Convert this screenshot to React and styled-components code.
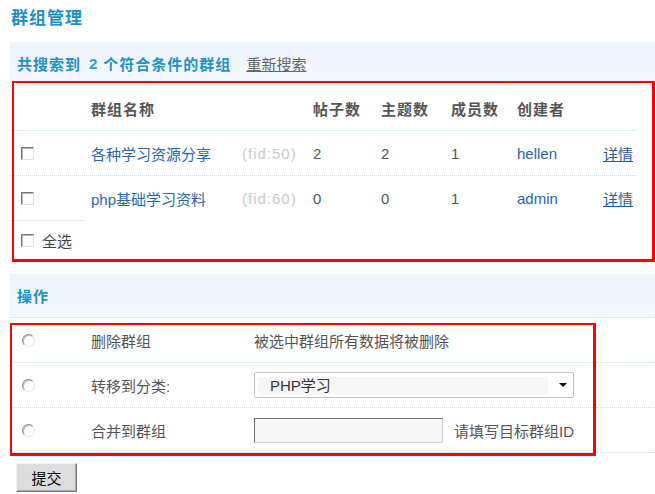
import React from "react";
import styled, { createGlobalStyle } from "styled-components";

const GlobalStyle = createGlobalStyle`
  html, body {
    margin: 0;
    padding: 0;
    background: #fff;
  }
  body {
    font-family: "Liberation Sans", "Noto Sans CJK SC", sans-serif;
    font-size: 15px;
    color: #555;
  }
`;

const groups = [
  { name: "各种学习资源分享", fid: 50, posts: 2, threads: 2, members: 1, founder: "hellen" },
  { name: "php基础学习资料", fid: 60, posts: 0, threads: 0, members: 1, founder: "admin" },
];

const Page = styled.div`
  padding-left: 10px;
  overflow: hidden;
`;

const Title = styled.h2`
  margin: 0;
  height: 42px;
  line-height: 37px;
  padding-left: 1px;
  font-size: 17px;
  font-weight: bold;
  letter-spacing: 1px;
  color: #1b8fcc;
`;

const Strip = styled.div`
  display: flex;
  align-items: center;
  box-sizing: border-box;
  height: ${(p) => p.$h}px;
  margin-top: ${(p) => p.$mt || 0}px;
  padding: ${(p) => p.$pt || 0}px 0 0 7px;
  background: linear-gradient(#edf4fc, #f4f8fd);
  border-bottom: ${(p) => (p.$rule ? "1px dotted #c6dcee" : "none")};
  font-weight: bold;
  letter-spacing: 1px;
  color: #1d93c8;
`;

const Count = styled.span`
  margin: 0 5px 0 8px;
  color: #2aa0d6;
`;

const ResetLink = styled.a`
  margin-left: 15px;
  font-weight: normal;
  letter-spacing: 0;
  color: #666;
  text-decoration: underline;
  cursor: pointer;
`;

/* red marking frame drawn over the block */
const Framed = styled.div`
  position: relative;
  padding-top: ${(p) => p.$pt || 0}px;

  &::after {
    content: "";
    position: absolute;
    pointer-events: none;
    top: ${(p) => p.$ft}px;
    left: ${(p) => p.$fl}px;
    ${(p) => (p.$fw ? `width: ${p.$fw}px;` : "right: 0;")}
    bottom: ${(p) => p.$fb}px;
    box-sizing: border-box;
    border: solid #f00;
    border-width: 2px 3px 3px 2px;
  }
`;

const Results = styled.div`
  border-top: 1px dotted #c6dcee;
`;

const Row = styled.div`
  display: grid;
  grid-template-columns: 75px 157px 71px 68px 70px 66px 86px 34px;
  width: 627px;
  height: 44px;
  align-items: center;
  border-top: ${(p) => (p.$head ? "none" : "1px dotted #c6dcee")};
  font-weight: ${(p) => (p.$head ? "bold" : "normal")};
  letter-spacing: ${(p) => (p.$head ? 1 : 0)}px;
  color: #555;
`;

const Cell = styled.div`
  display: flex;
  align-items: center;
  gap: 8px;
  padding-left: ${(p) => p.$pl || 0}px;
  white-space: nowrap;
  color: ${(p) => p.$color || "inherit"};
  letter-spacing: ${(p) => (p.$ls != null ? `${p.$ls}px` : "inherit")};
`;

const Link = styled.a`
  color: ${(p) => (p.$under ? "#1c5ea6" : "#2766ad")};
  text-decoration: ${(p) => (p.$under ? "underline" : "none")};
  cursor: pointer;
`;

const SelectAllRow = styled.div`
  display: flex;
  height: 40px;
`;

const SelectAllCell = styled.label`
  display: flex;
  align-items: center;
  gap: 8px;
  width: 75px;
  box-sizing: border-box;
  padding-left: 11px;
  border-top: 1px dotted #c6dcee;
  color: #444;
`;

const Check = styled.span`
  display: inline-block;
  box-sizing: border-box;
  width: 13px;
  height: 13px;
  border: 1px solid;
  border-color: #767676 #e0e0e0 #e0e0e0 #767676;
  box-shadow: inset 1px 1px 0 #b8b8b8;
  background: #fff;
`;

const Radio = styled(Check)`
  border-radius: 50%;
  border-color: #8a8a8a #e4e4e4 #e4e4e4 #8a8a8a;
  box-shadow: inset 1px 1px 0 #c4c4c4;
`;

const OpRow = styled.div`
  display: grid;
  grid-template-columns: 81px 163px 1fr;
  height: 44px;
  align-items: center;
  border-bottom: 1px dotted #c6dcee;
  color: #555;
`;

const Select = styled.div`
  display: flex;
  align-items: center;
  box-sizing: border-box;
  width: 320px;
  height: 26px;
  padding: 0 6px 0 3px;
  border: 1px solid #c6c6c6;
  border-radius: 2px;
  background: #fff;
`;

const SelectValue = styled.div`
  flex: 1;
  height: 17px;
  line-height: 17px;
  padding-left: 12px;
  background: #f7f7f7;
  color: #333;
`;

const Caret = styled.span`
  margin-left: 11px;
  border-left: 4px solid transparent;
  border-right: 4px solid transparent;
  border-top: 4px solid #111;
`;

const TextInput = styled.input`
  box-sizing: border-box;
  width: 189px;
  height: 25px;
  padding: 0 4px;
  border: 1px solid;
  border-color: #707070 #cfcfcf #cfcfcf #707070;
  background: #f7f7f7;
  outline: none;
`;

const Hint = styled.span`
  margin-left: 3px;
`;

const Submit = styled.button`
  display: block;
  box-sizing: border-box;
  width: 61px;
  height: 29px;
  margin: 10px 0 0 6px;
  padding: 0;
  border: 1px solid;
  border-color: #f2f2f2 #7a7a7a #7a7a7a #f2f2f2;
  box-shadow: inset -1px -1px 0 #a8a8a8;
  background: #dcdcdc;
  font-family: inherit;
  font-size: 15px;
  color: #000;
`;

export default function App() {
  return (
    <>
      <GlobalStyle />
      <Page>
        <Title>群组管理</Title>

        <Strip $h={39} $pt={3}>
          <span>共搜索到</span>
          <Count>2</Count>
          <span>个符合条件的群组</span>
          <ResetLink>重新搜索</ResetLink>
        </Strip>

        <Framed $pt={4} $ft={0} $fl={2} $fb={-2}>
          <Results>
            <Row $head>
              <Cell />
              <Cell $pl={6}>群组名称</Cell>
              <Cell />
              <Cell>帖子数</Cell>
              <Cell>主题数</Cell>
              <Cell>成员数</Cell>
              <Cell>创建者</Cell>
              <Cell />
            </Row>
            {groups.map((g) => (
              <Row key={g.fid}>
                <Cell $pl={11}>
                  <Check />
                </Cell>
                <Cell $pl={6}>
                  <Link>{g.name}</Link>
                </Cell>
                <Cell $color="#cacaca" $ls={1}>
                  (fid:{g.fid})
                </Cell>
                <Cell>{g.posts}</Cell>
                <Cell>{g.threads}</Cell>
                <Cell>{g.members}</Cell>
                <Cell>
                  <Link>{g.founder}</Link>
                </Cell>
                <Cell>
                  <Link $under>详情</Link>
                </Cell>
              </Row>
            ))}
            <SelectAllRow>
              <SelectAllCell>
                <Check />
                全选
              </SelectAllCell>
            </SelectAllRow>
          </Results>
        </Framed>

        <Strip $h={44} $mt={14} $rule>
          操作
        </Strip>

        <Framed $ft={5} $fl={0} $fw={586} $fb={-3}>
          <OpRow>
            <Cell $pl={12}>
              <Radio />
            </Cell>
            <Cell>删除群组</Cell>
            <Cell>被选中群组所有数据将被删除</Cell>
          </OpRow>
          <OpRow>
            <Cell $pl={12}>
              <Radio />
            </Cell>
            <Cell>转移到分类:</Cell>
            <Cell>
              <Select>
                <SelectValue>PHP学习</SelectValue>
                <Caret />
              </Select>
            </Cell>
          </OpRow>
          <OpRow>
            <Cell $pl={12}>
              <Radio />
            </Cell>
            <Cell>合并到群组</Cell>
            <Cell>
              <TextInput type="text" />
              <Hint>请填写目标群组ID</Hint>
            </Cell>
          </OpRow>
        </Framed>

        <Submit>提交</Submit>
      </Page>
    </>
  );
}
